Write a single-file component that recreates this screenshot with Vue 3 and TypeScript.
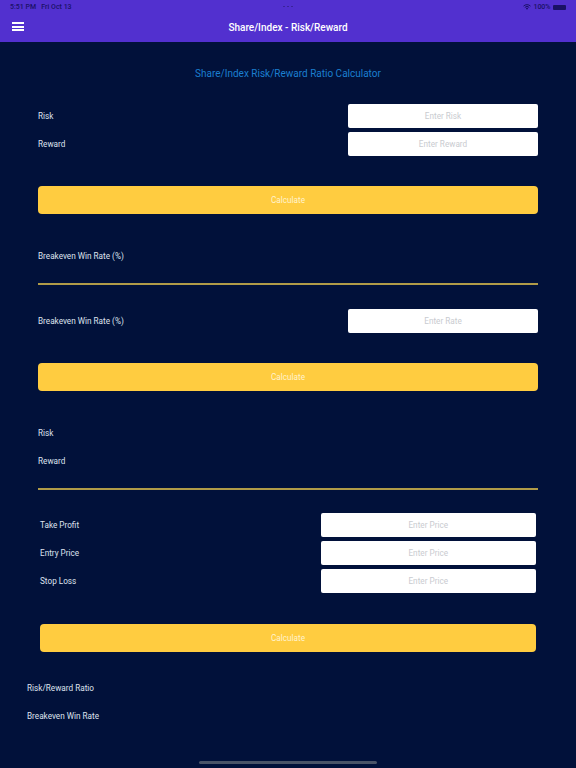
<script setup lang="ts">
const first = [
  { label: 'Risk', placeholder: 'Enter Risk' },
  { label: 'Reward', placeholder: 'Enter Reward' },
]
const third = ['Take Profit', 'Entry Price', 'Stop Loss']
</script>

<template>
  <div class="screen">
    <header class="top">
      <div class="status">
        <span class="time">5:51 PM&nbsp;&nbsp;&nbsp;Fri Oct 13</span>
        <span class="dots"><i></i><i></i><i></i></span>
        <span class="sys">
          <svg class="wifi" viewBox="0 0 16 12" width="8" height="6" fill="none" stroke="#1a1166" stroke-width="2">
            <path d="M1 4.2a10 10 0 0 1 14 0" />
            <path d="M3.6 6.8a6.4 6.4 0 0 1 8.8 0" />
            <path d="M6 9.2a3 3 0 0 1 4 0" />
            <path d="M8 11.6 6.6 10.2a2 2 0 0 1 2.8 0Z" fill="#1a1166" stroke="none" />
          </svg>
          <span>100%</span>
          <span class="battery"></span>
        </span>
      </div>
      <div class="nav">
        <span class="burger"><i></i><i></i><i></i></span>
        <span class="nav-title">Share/Index - Risk/Reward</span>
      </div>
    </header>

    <main class="content">
      <h1 class="title">Share/Index Risk/Reward Ratio Calculator</h1>

      <section class="block one">
        <div class="rows">
          <div v-for="r in first" :key="r.label" class="row">
            <span class="label">{{ r.label }}</span>
            <div class="input">{{ r.placeholder }}</div>
          </div>
        </div>
        <button class="calc">Calculate</button>
        <div class="out first-out"><span class="label">Breakeven Win Rate (%)</span></div>
        <div class="rule"></div>
      </section>

      <section class="block two">
        <div class="row">
          <span class="label">Breakeven Win Rate (%)</span>
          <div class="input">Enter Rate</div>
        </div>
        <button class="calc">Calculate</button>
        <div class="outs">
          <div class="out"><span class="label">Risk</span></div>
          <div class="out"><span class="label">Reward</span></div>
        </div>
        <div class="rule"></div>
      </section>

      <section class="three">
        <div class="rows">
          <div v-for="t in third" :key="t" class="row">
            <span class="label">{{ t }}</span>
            <div class="input wide">Enter Price</div>
          </div>
        </div>
        <button class="calc">Calculate</button>
      </section>

      <section class="results">
        <div class="out"><span class="label">Risk/Reward Ratio</span></div>
        <div class="out"><span class="label">Breakeven Win Rate</span></div>
      </section>
    </main>

    <div class="home"></div>
  </div>
</template>

<style>
html, body { margin: 0; background: #01113a; }
</style>

<style scoped>
.screen {
  width: 576px;
  height: 768px;
  background: #01113a;
  display: flex;
  flex-direction: column;
  position: relative;
  overflow: hidden;
  font-family: Roboto, "Liberation Sans", sans-serif;
  font-size: 8.2px;
  color: #dfe3ee;
}
.top { height: 42px; background: #5230cf; display: flex; flex-direction: column; flex: none; }
.status {
  height: 14px;
  display: flex;
  align-items: center;
  justify-content: space-between;
  padding: 0 10px;
  color: #1a1166;
  font-size: 7px;
  font-weight: 500;
  position: relative;
}
.dots { position: absolute; left: 283px; top: 6px; display: flex; gap: 2px; }
.dots i { width: 2px; height: 1px; background: #3a2399; display: block; }
.sys { display: flex; align-items: center; gap: 2.5px; }
.battery { width: 13px; height: 5px; background: #1a1166; border-radius: 1px; display: block; }
.nav { height: 28px; position: relative; display: flex; align-items: center; justify-content: center; }
.nav-title { color: #fff; font-size: 10px; font-weight: 500; margin-top: -1px; }
.burger { position: absolute; left: 12px; top: 8px; width: 12px; display: flex; flex-direction: column; gap: 1.5px; }
.burger i { display: block; height: 2px; background: #fff; }
.content { flex: 1; display: flex; flex-direction: column; padding: 0 38px; }
.title {
  margin: 26px 0 0;
  height: 11px;
  line-height: 11px;
  text-align: center;
  font-size: 10px;
  font-weight: 400;
  color: #1b7fd0;
}
.rows { display: flex; flex-direction: column; gap: 4px; }
.row { display: flex; align-items: center; justify-content: space-between; }
.label { line-height: 12px; }
.input {
  width: 190px;
  height: 24px;
  box-sizing: border-box;
  background: #fff;
  border-radius: 2px;
  display: flex;
  align-items: center;
  justify-content: center;
  color: #c9cbd0;
}
.input.wide { width: 215.5px; }
.calc {
  display: block;
  width: 100%;
  height: 28px;
  padding: 0;
  border: 0;
  border-radius: 4px;
  background: #ffcc40;
  color: #fff3cf;
  font: inherit;
}
.one { margin-top: 25px; }
.one .calc { margin-top: 30px; }
.out { height: 28px; display: flex; align-items: center; }
.first-out { margin-top: 28px; }
.rule { height: 2px; background: #b09b48; }
.one .rule { margin-top: 13px; }
.two { margin-top: 24px; }
.two .calc { margin-top: 30px; }
.two .outs { margin-top: 28px; display: flex; flex-direction: column; }
.two .rule { margin-top: 13px; }
.three { margin-top: 23px; padding: 0 2px; }
.three .calc { margin-top: 31px; }
.results { margin: 22px 0 0 -11px; display: flex; flex-direction: column; }
.home {
  position: absolute;
  left: 199px;
  bottom: 4px;
  width: 178px;
  height: 3px;
  border-radius: 2px;
  background: #4a5468;
}
</style>
